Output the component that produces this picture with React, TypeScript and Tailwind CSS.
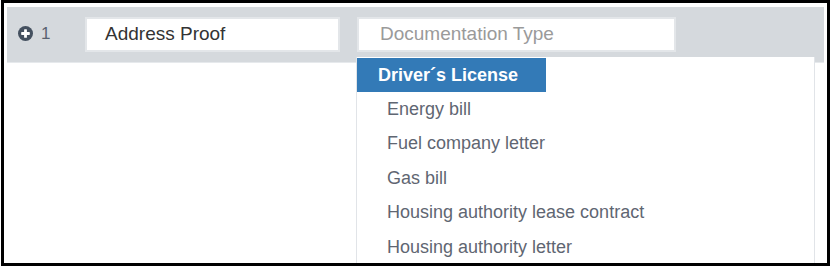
const OPTIONS = [
  'Energy bill',
  'Fuel company letter',
  'Gas bill',
  'Housing authority lease contract',
  'Housing authority letter',
];

function PlusCircle() {
  return (
    <svg width="15" height="15" viewBox="0 0 16 16" aria-hidden="true">
      <circle cx="8" cy="8" r="8" fill="#44505f" />
      <rect x="3.4" y="6.5" width="9.2" height="3" rx="0.6" fill="#fff" />
      <rect x="6.5" y="3.4" width="3" height="9.2" rx="0.6" fill="#fff" />
    </svg>
  );
}

export default function App() {
  return (
    <div className="w-[831px] h-[267px] bg-white pl-[1px]" style={{ fontFamily: '"Liberation Sans", Arial, sans-serif' }}>
      <div className="relative w-[829px] h-[266px] border-[3px] border-black overflow-hidden pl-[3px] pt-[4px] pr-[3px]">
        {/* header row */}
        <div className="flex items-start h-[56px] bg-[#d5d9dd] border-b border-[#e6e9ec]">
          <div className="flex items-center gap-[8px] pl-[11px] pt-[18px] w-[78px]">
            <PlusCircle />
            <span className="text-[17px] leading-none text-[#5a6270]">1</span>
          </div>
          <div className="mt-[10px] w-[255px] h-[35px] bg-white border-2 border-[#e3e6e9] flex items-center pl-[18px] text-[19px] text-[#333]">
            Address Proof
          </div>
          <div className="ml-[17px] mt-[10px] w-[319px] h-[35px] bg-white border-2 border-[#e3e6e9] flex items-center pl-[21px] text-[19px] text-[#9a9a9a]">
            Documentation Type
          </div>
        </div>

        {/* dropdown list */}
        <div className="absolute left-[352px] top-[54px] w-[459px] h-[260px] bg-white border-x border-[#e1e4e8] pt-[1px]">
          <div className="w-[189px] h-[34px] bg-[#337ab7] flex items-center pl-[21px] text-[18px] font-bold text-white">
            Driver´s License
          </div>
          {OPTIONS.map((opt) => (
            <div key={opt} className="h-[34.5px] flex items-center pl-[30px] text-[18px] text-[#5f6672]">
              {opt}
            </div>
          ))}
        </div>
      </div>
    </div>
  );
}
